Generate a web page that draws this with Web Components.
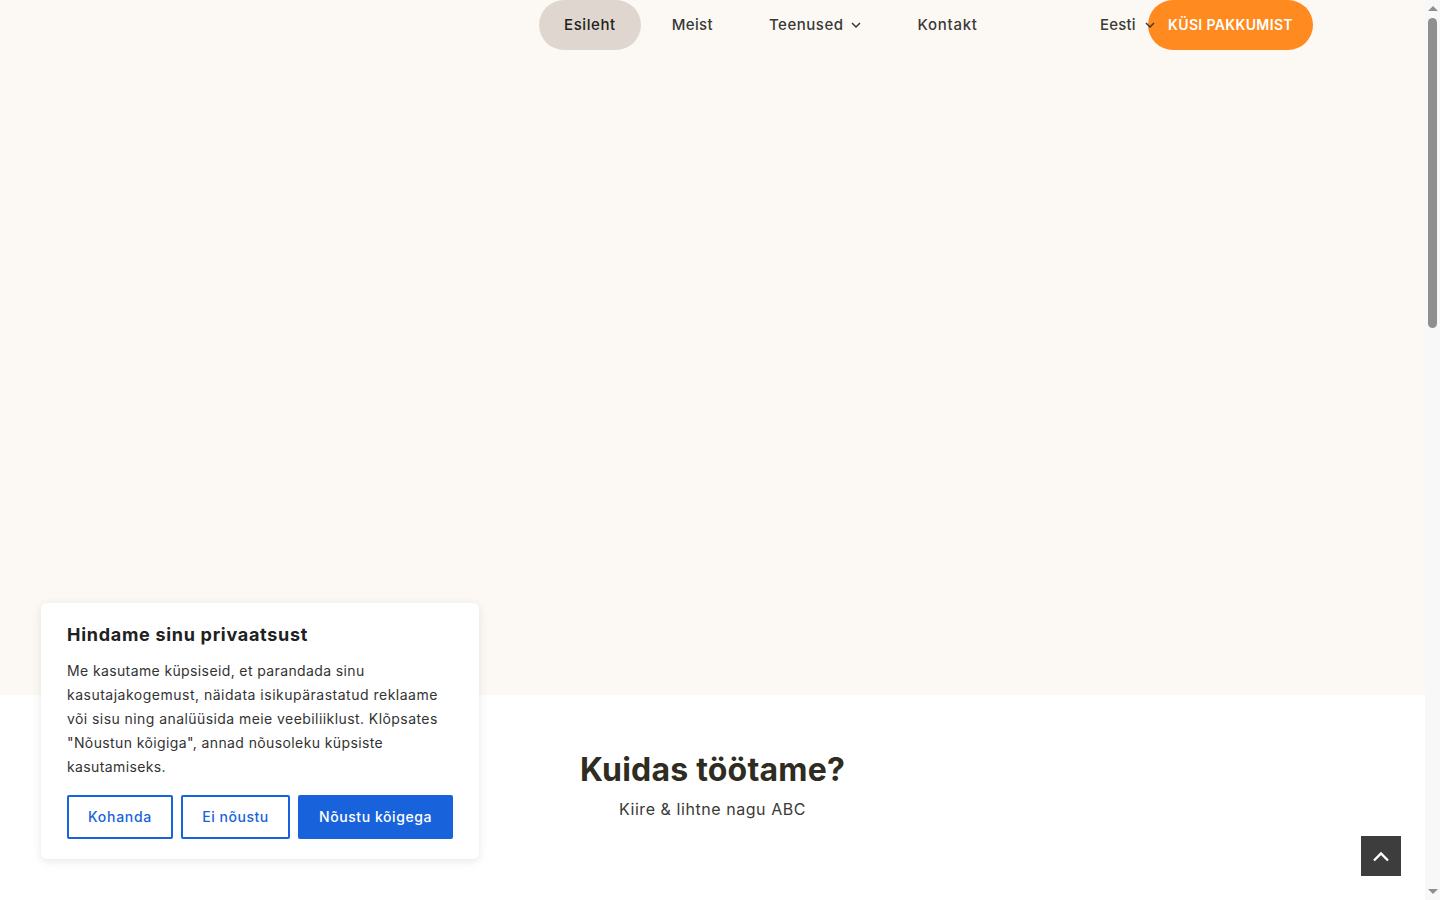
<!DOCTYPE html>
<html lang="et"><head><meta charset="utf-8"><title>Esileht</title>
<style>
html,body{margin:0;height:900px;overflow:hidden;background:#fff}
body{font-family:Inter,"Liberation Sans",sans-serif}
</style></head><body>
<x-page></x-page>
<script>
const chevron=`<svg style="display:block;flex:none" width="10" height="6" viewBox="0 0 10 6" fill="none" stroke="currentColor" stroke-width="1.5" aria-hidden="true"><path d="M1 1l4 4 4-4"/></svg>`;
function def(name,html){customElements.define(name,class extends HTMLElement{constructor(){super();this.attachShadow({mode:'open'}).innerHTML=html;}})}

def('x-nav-item',`<style>
:host{display:flex;align-items:center;gap:7px;height:50px;padding:0 25px 2px;border-radius:25px;font-size:15px;font-weight:500;color:#3a3a36;white-space:nowrap;box-sizing:border-box}
:host([active]){background:#dfd7cf;color:#23221d}
</style><slot></slot><slot name="icon"></slot>`);

def('x-header',`<style>
:host{display:flex;align-items:flex-start;height:50px;padding-left:539px}
.nav{display:flex;gap:6px;width:561px}
.right{display:flex;align-items:center;height:50px}
.lang{display:flex;align-items:center;gap:9px;height:50px;padding-bottom:2px;box-sizing:border-box;font-size:15px;font-weight:500;color:#3a3a36;letter-spacing:.15px;position:relative;z-index:1;width:48px;white-space:nowrap}
.cta{display:flex;align-items:center;justify-content:center;width:165px;height:50px;padding-bottom:2px;box-sizing:border-box;border-radius:25px;background:#ff8a20;color:#fff;font-size:14px;font-weight:600;letter-spacing:.36px;white-space:nowrap}
</style>
<nav class="nav">
<x-nav-item active style="letter-spacing:.58px">Esileht</x-nav-item>
<x-nav-item style="letter-spacing:.35px">Meist</x-nav-item>
<x-nav-item style="letter-spacing:.53px;padding-right:26px">Teenused<span slot="icon" style="padding-top:2px">${chevron}</span></x-nav-item>
<x-nav-item style="letter-spacing:.72px">Kontakt</x-nav-item>
</nav>
<div class="right"><div class="lang">Eesti<span style="padding-top:2px">${chevron}</span></div><div class="cta">KÜSI PAKKUMIST</div></div>`);

def('x-hero',`<style>:host{display:block;height:695px;background:#fcf9f5}</style><slot></slot>`);

def('x-how',`<style>
:host{display:block;text-align:center;padding-top:53px;color:#2f2c22}
h2{margin:0;font-size:32px;line-height:44px;font-weight:700;letter-spacing:.2px}
p{margin:5px 0 0;font-size:16px;line-height:24px;color:#3a3a36;letter-spacing:.56px}
</style><h2>Kuidas töötame?</h2><p>Kiire &amp; lihtne nagu ABC</p>`);

def('x-btn',`<style>
:host{display:flex;align-items:center;justify-content:center;height:44px;padding-bottom:2px;box-sizing:border-box;border:2px solid #1863dc;border-radius:2px;color:#1863dc;font-size:14px;font-weight:500;white-space:nowrap}
:host([primary]){background:#1863dc;color:#fff}
</style><slot></slot>`);

def('x-cookie',`<style>
:host{display:block;position:absolute;left:41px;top:603px;width:438px;height:256px;box-sizing:border-box;padding:20px 26px 20px;background:#fff;border-radius:6px;box-shadow:0 2px 10px rgba(0,0,0,.1);color:#212121}
h3{margin:0;font-size:18px;line-height:24px;font-weight:700;letter-spacing:.71px}
p{margin:12px 0 0;font-size:14px;line-height:24px;color:#333;font-weight:400}
span{display:block;white-space:nowrap}
.row{display:flex;gap:8px;margin-top:16px}
</style><h3>Hindame sinu privaatsust</h3>
<p><span style="letter-spacing:.38px">Me kasutame küpsiseid, et parandada sinu</span><span style="letter-spacing:.5px">kasutajakogemust, näidata isikupärastatud reklaame</span><span style="letter-spacing:.43px">või sisu ning analüüsida meie veebiliiklust. Klõpsates</span><span style="letter-spacing:.39px">"Nõustun kõigiga", annad nõusoleku küpsiste</span><span style="letter-spacing:.38px">kasutamiseks.</span></p>
<div class="row"><x-btn style="width:106px;letter-spacing:.7px">Kohanda</x-btn><x-btn style="width:109px;letter-spacing:.55px">Ei nõustu</x-btn><x-btn primary style="width:155px;letter-spacing:.57px">Nõustu kõigega</x-btn></div>`);

def('x-totop',`<style>
:host{display:flex;align-items:center;justify-content:center;position:absolute;left:1361px;top:836px;width:40px;height:40px;background:#3d3d3d}
</style><svg width="18" height="11" viewBox="0 0 18 11" fill="none" stroke="#fff" stroke-width="2.4" aria-hidden="true"><path d="M2 9.5l7-7 7 7"/></svg>`);

def('x-scrollbar',`<style>
:host{display:flex;flex-direction:column;align-items:center;width:15px;height:900px;background:#f8f8f8;flex:none}
.a{width:0;height:0;border-left:5px solid transparent;border-right:5px solid transparent;margin-top:6px}
.up{border-bottom:5px solid #8f8f8f}
.thumb{width:9px;height:310px;border-radius:5px;background:#8f8f8f;margin-top:7px}
.sp{flex:1}
.dn{border-top:5px solid #8f8f8f;margin:0 0 6px}
</style><div class="a up"></div><div class="thumb"></div><div class="sp"></div><div class="a dn"></div>`);

def('x-page',`<style>
:host{display:flex;width:1440px;height:900px;position:relative;overflow:hidden}
main{flex:1;min-width:0}
</style><main><x-hero><x-header></x-header></x-hero><x-how></x-how></main><x-scrollbar></x-scrollbar><x-cookie></x-cookie><x-totop></x-totop>`);
</script>
</body></html>
